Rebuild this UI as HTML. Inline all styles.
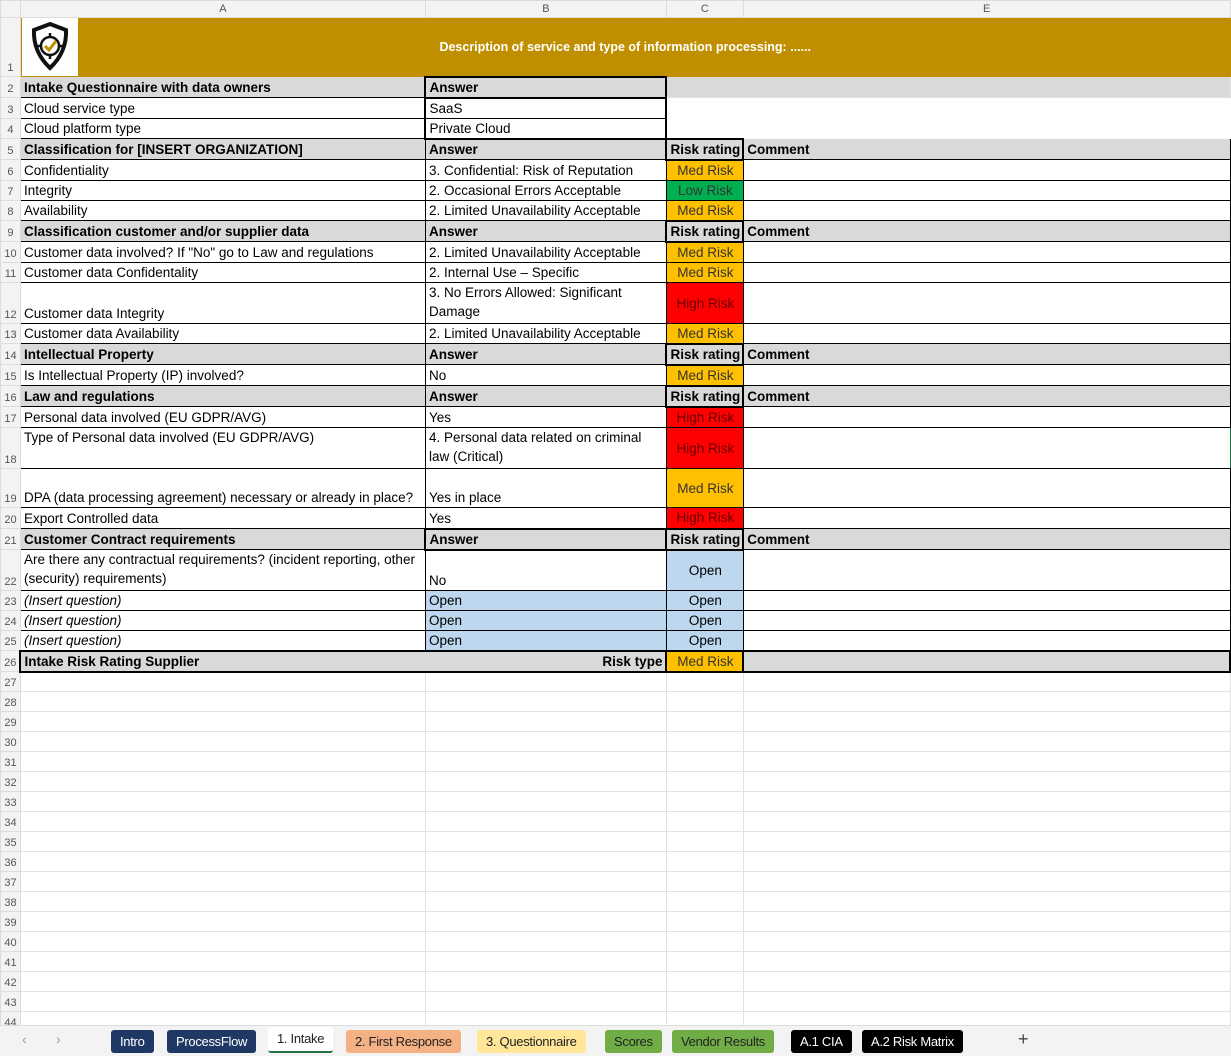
<!DOCTYPE html>
<html><head><meta charset="utf-8"><style>
*{box-sizing:border-box;margin:0;padding:0}
body{width:1231px;height:1056px;overflow:hidden;background:#fff;font-family:"Liberation Sans",sans-serif;font-size:13.5px;color:#000;position:relative}
table{border-collapse:collapse;table-layout:fixed;position:absolute;left:0;top:0}
td{overflow:hidden;white-space:nowrap;vertical-align:bottom;padding:0 2px 2px 3px;border:1px solid #e1e1e1;line-height:15px}
td.n{background:#f3f3f3;color:#555;font-size:11px;text-align:center;padding:0 0 1px 0;border-color:#dcdcdc;line-height:13px}
.h td{background:#f3f3f3;color:#555;text-align:center;vertical-align:middle;line-height:14px;font-size:11px;border-color:#dcdcdc;padding:0}
.g{background:#d9d9d9;font-weight:bold}
.b{border:1px solid #000}
.bk{border:2px solid #000}
.c{text-align:center;vertical-align:middle;padding-bottom:0}
.m{background:#ffc000;color:#333}
.l{background:#00b050;color:#333}
.r{background:#ff0000;color:#600}
.o{background:#bdd7ee}
.w{white-space:normal;line-height:19px}
.it{font-style:italic}
#tabs{position:absolute;left:0;top:1025px;width:1231px;height:31px;background:#f3f3f3;border-top:1px solid #ddd}
.t{position:absolute;top:4px;height:23px;line-height:23px;font-size:13px;padding:0 9px;border-radius:3px;letter-spacing:-0.3px}
</style></head><body>
<table>
<colgroup><col style="width:20px"><col style="width:405px"><col style="width:241px"><col style="width:76px"><col style="width:487px"></colgroup>
<tr class="h" style="height:17px"><td></td><td>A</td><td>B</td><td>C</td><td>E</td></tr>
<tr style="height:59px"><td class="n">1</td><td colspan="4" style="background:#bf8f00;position:relative;border-color:#bf8f00"><div style="position:absolute;left:1px;top:0;width:56px;height:58px;background:#fff"><svg width="56" height="58" viewBox="0 0 56 58"><path d="M28 6 L44 12 Q45 34 28 50 Q11 34 12 12 Z" fill="none" stroke="#111" stroke-width="4"/><circle cx="28" cy="28" r="9" fill="none" stroke="#111" stroke-width="2.5"/><path d="M28 15v5M28 36v5M15 28h5M36 28h5" stroke="#111" stroke-width="2.5"/><path d="M23 28l4 4 7-9" fill="none" stroke="#bf8f00" stroke-width="3"/></svg></div><div style="position:absolute;left:0;right:0;top:22px;text-align:center;color:#fff;font-weight:bold;font-size:12.5px">Description of service and type of information processing: ......</div></td></tr>
<tr style="height:21px"><td class="n">2</td><td class="g b">Intake Questionnaire with data owners</td><td class="g bk">Answer</td><td colspan="2" class="g" style="font-weight:normal"></td></tr>
<tr style="height:21px"><td class="n">3</td><td class="b">Cloud service type</td><td class="b" style="border-left:2px solid #000;border-right:2px solid #000">SaaS</td><td colspan="2" rowspan="2" style="border-color:#fff"></td></tr>
<tr style="height:20px"><td class="n">4</td><td class="b">Cloud platform type</td><td class="b" style="border-left:2px solid #000;border-right:2px solid #000;border-bottom:2px solid #000">Private Cloud</td></tr>
<tr style="height:21px"><td class="n">5</td><td class="g b">Classification for [INSERT ORGANIZATION]</td><td class="g b">Answer</td><td class="g bk">Risk rating</td><td class="g b">Comment</td></tr>
<tr style="height:21px"><td class="n">6</td><td class="b">Confidentiality</td><td class="b">3. Confidential: Risk of Reputation</td><td class="b c m">Med Risk</td><td class="b"></td></tr>
<tr style="height:20px"><td class="n">7</td><td class="b">Integrity</td><td class="b">2. Occasional Errors Acceptable</td><td class="b c l">Low Risk</td><td class="b"></td></tr>
<tr style="height:20px"><td class="n">8</td><td class="b">Availability</td><td class="b">2. Limited Unavailability Acceptable</td><td class="b c m">Med Risk</td><td class="b"></td></tr>
<tr style="height:21px"><td class="n">9</td><td class="g b">Classification customer and/or supplier data</td><td class="g b">Answer</td><td class="g bk">Risk rating</td><td class="g b">Comment</td></tr>
<tr style="height:21px"><td class="n">10</td><td class="b">Customer data involved? If "No" go to Law and regulations</td><td class="b">2. Limited Unavailability Acceptable</td><td class="b c m">Med Risk</td><td class="b"></td></tr>
<tr style="height:20px"><td class="n">11</td><td class="b">Customer data Confidentality</td><td class="b">2. Internal Use – Specific</td><td class="b c m">Med Risk</td><td class="b"></td></tr>
<tr style="height:40px"><td class="n">12</td><td class="b">Customer data Integrity</td><td class="b w">3. No Errors Allowed: Significant Damage</td><td class="b c r">High Risk</td><td class="b"></td></tr>
<tr style="height:20px"><td class="n">13</td><td class="b">Customer data Availability</td><td class="b">2. Limited Unavailability Acceptable</td><td class="b c m">Med Risk</td><td class="b"></td></tr>
<tr style="height:21px"><td class="n">14</td><td class="g b">Intellectual Property</td><td class="g b">Answer</td><td class="g bk">Risk rating</td><td class="g b">Comment</td></tr>
<tr style="height:21px"><td class="n">15</td><td class="b">Is Intellectual Property (IP) involved?</td><td class="b">No</td><td class="b c m">Med Risk</td><td class="b"></td></tr>
<tr style="height:21px"><td class="n">16</td><td class="g b">Law and regulations</td><td class="g b">Answer</td><td class="g bk">Risk rating</td><td class="g b">Comment</td></tr>
<tr style="height:21px"><td class="n">17</td><td class="b">Personal data involved (EU GDPR/AVG)</td><td class="b">Yes</td><td class="b c r">High Risk</td><td class="b"></td></tr>
<tr style="height:40px"><td class="n">18</td><td class="b" style="vertical-align:top;padding-top:2px">Type of Personal data involved (EU GDPR/AVG)</td><td class="b w">4. Personal data related on criminal law (Critical)</td><td class="b c r">High Risk</td><td class="b" style="border-right:1px solid #217346"></td></tr>
<tr style="height:39px"><td class="n">19</td><td class="b">DPA (data processing agreement) necessary or already in place?</td><td class="b">Yes in place</td><td class="b c m">Med Risk</td><td class="b"></td></tr>
<tr style="height:21px"><td class="n">20</td><td class="b">Export Controlled data</td><td class="b">Yes</td><td class="b c r">High Risk</td><td class="b"></td></tr>
<tr style="height:21px"><td class="n">21</td><td class="g b">Customer Contract requirements</td><td class="g bk">Answer</td><td class="g bk">Risk rating</td><td class="g b">Comment</td></tr>
<tr style="height:41px"><td class="n">22</td><td class="b w">Are there any contractual requirements? (incident reporting, other (security) requirements)</td><td class="b">No</td><td class="b c o">Open</td><td class="b"></td></tr>
<tr style="height:20px"><td class="n">23</td><td class="b it">(Insert question)</td><td class="b o">Open</td><td class="b c o">Open</td><td class="b"></td></tr>
<tr style="height:20px"><td class="n">24</td><td class="b it">(Insert question)</td><td class="b o">Open</td><td class="b c o">Open</td><td class="b"></td></tr>
<tr style="height:20px"><td class="n">25</td><td class="b it">(Insert question)</td><td class="b o">Open</td><td class="b c o">Open</td><td class="b"></td></tr>
<tr style="height:21px"><td class="n">26</td><td class="g bk" colspan="2" style="position:relative">Intake Risk Rating Supplier<span style="position:absolute;right:3px;bottom:2px">Risk type</span></td><td class="bk c m">Med Risk</td><td class="g bk"></td></tr>
<tr style="height:20px"><td class="n">27</td><td></td><td></td><td></td><td></td></tr>
<tr style="height:20px"><td class="n">28</td><td></td><td></td><td></td><td></td></tr>
<tr style="height:20px"><td class="n">29</td><td></td><td></td><td></td><td></td></tr>
<tr style="height:20px"><td class="n">30</td><td></td><td></td><td></td><td></td></tr>
<tr style="height:20px"><td class="n">31</td><td></td><td></td><td></td><td></td></tr>
<tr style="height:20px"><td class="n">32</td><td></td><td></td><td></td><td></td></tr>
<tr style="height:20px"><td class="n">33</td><td></td><td></td><td></td><td></td></tr>
<tr style="height:20px"><td class="n">34</td><td></td><td></td><td></td><td></td></tr>
<tr style="height:20px"><td class="n">35</td><td></td><td></td><td></td><td></td></tr>
<tr style="height:20px"><td class="n">36</td><td></td><td></td><td></td><td></td></tr>
<tr style="height:20px"><td class="n">37</td><td></td><td></td><td></td><td></td></tr>
<tr style="height:20px"><td class="n">38</td><td></td><td></td><td></td><td></td></tr>
<tr style="height:20px"><td class="n">39</td><td></td><td></td><td></td><td></td></tr>
<tr style="height:20px"><td class="n">40</td><td></td><td></td><td></td><td></td></tr>
<tr style="height:20px"><td class="n">41</td><td></td><td></td><td></td><td></td></tr>
<tr style="height:20px"><td class="n">42</td><td></td><td></td><td></td><td></td></tr>
<tr style="height:20px"><td class="n">43</td><td></td><td></td><td></td><td></td></tr>
<tr style="height:20px"><td class="n">44</td><td></td><td></td><td></td><td></td></tr>
</table>
<div id="tabs">
<span style="position:absolute;left:22px;top:5px;color:#999;font-size:14px">‹</span>
<span style="position:absolute;left:56px;top:5px;color:#999;font-size:14px">›</span>
<div class="t" style="left:111px;background:#203864;color:#fff">Intro</div>
<div class="t" style="left:167px;background:#203864;color:#fff">ProcessFlow</div>
<div class="t" style="left:268px;background:#fff;color:#222;top:1px;height:26px;border-bottom:2px solid #217346">1. Intake</div>
<div class="t" style="left:346px;background:#f4b183;color:#222">2. First Response</div>
<div class="t" style="left:477px;background:#ffe699;color:#222">3. Questionnaire</div>
<div class="t" style="left:605px;background:#70ad47;color:#222">Scores</div>
<div class="t" style="left:672px;background:#70ad47;color:#222">Vendor Results</div>
<div class="t" style="left:791px;background:#000;color:#fff">A.1 CIA</div>
<div class="t" style="left:862px;background:#000;color:#fff">A.2 Risk Matrix</div>
<span style="position:absolute;left:1018px;top:3px;color:#444;font-size:18px">+</span>
</div>
</body></html>
